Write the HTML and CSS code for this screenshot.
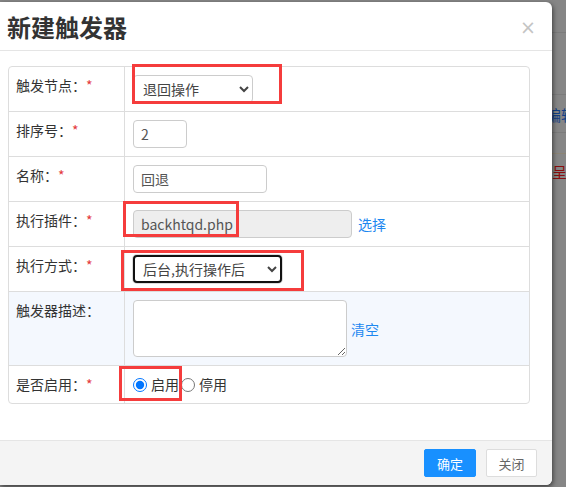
FILE: index.html
```html
<!DOCTYPE html>
<html lang="zh-CN">
<head>
<meta charset="utf-8">
<title>新建触发器</title>
<link rel="stylesheet" href="styles.css">
</head>
<body>
<div class="page">
  <div class="bg-row r1"></div>
  <div class="bg-row r2"></div>
  <div class="bg-row r3"><span class="bg-link">编辑 :</span></div>
  <div class="bg-row r4"></div>
  <div class="bg-row r5"><span class="bg-red">呈理</span></div>
</div>

<div class="modal">
  <div class="modal-header">
    <h3 class="title">新建触发器</h3>
    <span class="close">×</span>
  </div>
  <div class="modal-body">
    <div class="form">
      <div class="label">触发节点：<i>*</i></div>
      <div class="value"><select class="sel sel-node"><option>退回操作</option></select></div>

      <div class="label">排序号：<i>*</i></div>
      <div class="value"><input class="inp inp-sort" type="text" value="2"></div>

      <div class="label">名称：<i>*</i></div>
      <div class="value"><input class="inp inp-name" type="text" value="回退"></div>

      <div class="label">执行插件：<i>*</i></div>
      <div class="value"><input class="inp inp-plugin" type="text" value="backhtqd.php" readonly><a class="link link-pick">选择</a></div>

      <div class="label">执行方式：<i>*</i></div>
      <div class="value"><select class="sel sel-mode"><option>后台,执行操作后</option></select></div>

      <div class="label alt">触发器描述：</div>
      <div class="value alt"><textarea class="txt"></textarea><a class="link link-clear">清空</a></div>

      <div class="label">是否启用：<i>*</i></div>
      <div class="value radios"><label class="radio"><input type="radio" name="en" checked>启用</label><label class="radio"><input class="r2" type="radio" name="en">停用</label></div>
    </div>
  </div>
  <div class="modal-footer">
    <button class="btn btn-primary">确定</button>
    <button class="btn btn-default">关闭</button>
  </div>
</div>

<div class="mark m1"></div>
<div class="mark m2"></div>
<div class="mark m3"></div>
<div class="mark m4"></div>
</body>
</html>
```

FILE: styles.css
```css
* { box-sizing: border-box; }
html, body { margin: 0; padding: 0; }
body {
  width: 566px;
  height: 487px;
  overflow: hidden;
  background: #868686;
  font-family: "Noto Sans", "Noto Sans CJK SC", sans-serif;
  font-size: 14px;
  color: #333;
  position: relative;
}

/* background page (behind the dialog) */
.page { margin-left: 552px; overflow: hidden; }
.bg-row { border-bottom: 1px solid #7b7b7b; overflow: hidden; white-space: nowrap; }
.r1 { height: 33px; }
.r2 { height: 62px; }
.r3 { height: 38px; padding-top: 10px; }
.r4 { height: 21px; border-bottom-color: #8c8474; }
.r5 { height: 60px; border-bottom: none; padding-top: 8px; }
.bg-link { display: block; margin-left: -6px; color: #123f86; font-size: 15px; line-height: 20px; font-family: "Noto Sans CJK SC", sans-serif; }
.bg-red { display: block; margin-left: 0; color: #8a0d0d; font-size: 15px; line-height: 20px; font-family: "Noto Sans CJK SC", sans-serif; }

/* dialog */
.modal {
  position: absolute;
  left: 0;
  top: 2px;
  width: 552px;
  height: 483px;
  background: #fff;
  border-radius: 0 6px 6px 0;
  box-shadow: 1px 2px 5px rgba(0,0,0,0.55);
  display: flex;
  flex-direction: column;
  overflow: hidden;
}
.modal-header {
  height: 49px;
  border-bottom: 1px solid #e5e5e5;
  display: flex;
  align-items: center;
  justify-content: space-between;
  padding: 0 16px 0 7px;
  flex: none;
}
.title {
  margin: 0;
  font-size: 24px;
  font-weight: 700;
  color: #333;
  font-family: "Noto Sans CJK SC", sans-serif;
  line-height: 30px;
  padding-top: 2px;
}
.close {
  font-size: 19px;
  color: #c4c4c4;
  line-height: 20px;
  font-family: "DejaVu Sans", sans-serif;
  margin-top: 1px;
}
.modal-body {
  flex: 1;
  padding: 15px 22px 0 8px;
}
.form {
  display: grid;
  grid-template-columns: 116px 1fr;
  border: 1px solid #dddddd;
  border-radius: 4px;
  overflow: hidden;
}
.label, .value { border-top: 1px solid #dddddd; }
.label:nth-child(1), .value:nth-child(2) { border-top: none; }
.label {
  border-right: 1px solid #dddddd;
  padding: 8px 7px;
  line-height: 20px;
  font-family: "Noto Sans CJK SC", sans-serif;
  color: #333;
  white-space: nowrap;
}
.label i { font-style: normal; color: #e4393c; }
.value {
  padding: 8px;
  display: flex;
  align-items: center;
}
.alt { background: #f4f8fe; }

.sel, .inp, .txt {
  font-family: "Noto Sans CJK SC", sans-serif;
  font-size: 14px;
  color: #555;
  border: 1px solid #cccccc;
  border-radius: 4px;
  background: #fff;
  height: 28px;
  margin: 0;
}
.inp { padding: 0 7px; outline: none; }
.sel { padding: 0 4px 0 5px; color: #444; }
.sel-node { width: 120px; }
.sel-mode { width: 149px; border: 2px solid #111; box-shadow: 0 0 0 1px #dcdcdc; padding-left: 4px; }
.inp-sort { width: 54px; }
.inp-name { width: 134px; }
.inp-plugin { width: 219px; background: #eeeeee; }
.txt { width: 214px; height: 57px; resize: vertical; }
.link { color: #1e88f0; font-family: "Noto Sans CJK SC", sans-serif; line-height: 20px; cursor: pointer; }
.link-pick { margin-left: 6px; }
.link-clear { margin-left: 4px; }

.radios { line-height: 21px; }
.radio { display: inline-flex; align-items: center; font-family: "Noto Sans CJK SC", sans-serif; color: #333; }
.radio input { width: 14px; height: 14px; margin: 0 4px 0 0; accent-color: #0075ff; }
.radio input.r2 { margin-left: 2px; }

.modal-footer {
  flex: none;
  height: 45px;
  border-top: 1px solid #e5e5e5;
  background: #f4f4f4;
  display: flex;
  align-items: center;
  justify-content: flex-end;
  gap: 10px;
  padding: 0 15px 0 0;
}
.btn {
  height: 28px;
  padding: 0;
  font-family: "Noto Sans CJK SC", sans-serif;
  font-size: 13px;
  border-radius: 2px;
  border: 1px solid #dddddd;
  background: #fff;
  color: #666;
  width: 51px;
}
.btn-primary { width: 52px; background: #1890ff; border-color: #1890ff; color: #fff; }

/* red annotation boxes drawn over the form */
.mark { position: absolute; border: 3px solid #f53c3c; pointer-events: none; }
.m1 { left: 132px; top: 64px; width: 150px; height: 40px; }
.m2 { left: 123px; top: 201px; width: 116px; height: 36px; }
.m3 { left: 121px; top: 250px; width: 183px; height: 41px; }
.m4 { left: 119px; top: 366px; width: 63px; height: 35px; }
```
